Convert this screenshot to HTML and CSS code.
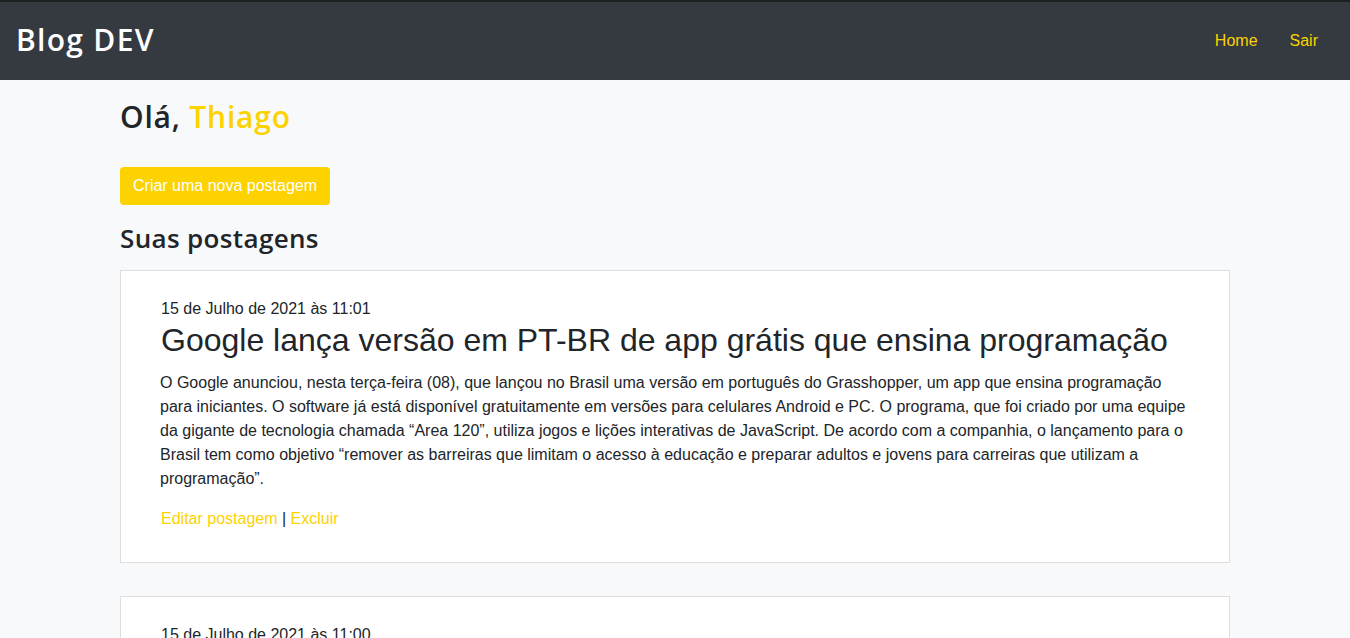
FILE: index.html
```html
<!DOCTYPE html>
<html lang="pt-BR">
<head>
<meta charset="utf-8">
<title>Blog DEV</title>
<link rel="stylesheet" href="styles.css">
</head>
<body>
<header class="navbar">
  <a class="brand" href="#">Blog DEV</a>
  <nav class="nav">
    <a class="nav-link" href="#">Home</a>
    <a class="nav-link" href="#">Sair</a>
  </nav>
</header>
<main class="container">
  <h2 class="greeting">Olá, <span class="accent">Thiago</span></h2>
  <a class="btn" href="#">Criar uma nova postagem</a>
  <h3 class="section-title">Suas postagens</h3>
  <article class="card">
    <div class="date">15 de Julho de 2021 às 11:01</div>
    <h1 class="post-title">Google lança versão em PT-BR de app grátis que ensina programação</h1>
    <p class="post-body">O Google anunciou, nesta terça-feira (08), que lançou no Brasil uma versão em português do Grasshopper, um app que ensina programação para iniciantes. O software já está disponível gratuitamente em versões para celulares Android e PC. O programa, que foi criado por uma equipe da gigante de tecnologia chamada “Area 120”, utiliza jogos e lições interativas de JavaScript. De acordo com a companhia, o lançamento para o Brasil tem como objetivo “remover as barreiras que limitam o acesso à educação e preparar adultos e jovens para carreiras que utilizam a programação”.</p>
    <div class="actions"><a href="#">Editar postagem</a> | <a href="#">Excluir</a></div>
  </article>
  <article class="card">
    <div class="date">15 de Julho de 2021 às 11:00</div>
    <h1 class="post-title">Nova postagem</h1>
    <p class="post-body">Conteúdo da postagem.</p>
    <div class="actions"><a href="#">Editar postagem</a> | <a href="#">Excluir</a></div>
  </article>
</main>
</body>
</html>
```

FILE: styles.css
```css
* { box-sizing: border-box; }
html, body { margin: 0; padding: 0; }
body {
  background: #f8f9fa;
  font-family: "Liberation Sans", Arial, sans-serif;
  font-size: 16px;
  line-height: 24px;
  color: #212529;
}
a { text-decoration: none; }
.navbar {
  height: 80px;
  background: #343a40;
  border-top: 2px solid #1e1f21;
  display: flex;
  align-items: center;
  justify-content: space-between;
  padding: 0 16px;
}
.brand {
  font-family: "Open Sans", "Noto Sans", sans-serif;
  font-weight: 600;
  font-size: 30px;
  color: #fff;
  letter-spacing: 1.3px;
  padding-bottom: 2px;
}
.nav { display: flex; }
.nav-link {
  color: #fcd200;
  padding: 0 16px;
  font-size: 16px;
}
.container {
  width: 1110px;
  margin: 0 auto;
  padding-top: 18px;
}
.greeting {
  font-family: "Open Sans", "Noto Sans", sans-serif;
  font-weight: 600;
  font-size: 30px;
  line-height: 38px;
  margin: 0 0 31px;
  letter-spacing: 0.8px;
}
.accent { color: #fcd200; }
.btn {
  display: inline-block;
  background: #fcd200;
  color: #fff;
  padding: 7px 13px;
  border-radius: 4px;
  font-size: 16px;
  line-height: 24px;
}
.section-title {
  font-family: "Open Sans", "Noto Sans", sans-serif;
  font-weight: 600;
  font-size: 26px;
  line-height: 34px;
  margin: 16px 0 15px;
  letter-spacing: 0.35px;
}
.card {
  background: #fff;
  border: 1px solid #dedede;
  padding: 26px 40px 31px;
  margin-bottom: 33px;
}
.date { font-size: 16px; line-height: 24px; }
.post-title {
  font-weight: 400;
  font-size: 32px;
  line-height: 38px;
  margin: 0 0 12px;
}
.post-body {
  margin: 0 0 16px -1px;
  font-size: 16px;
  line-height: 24px;
}
.actions { color: #212529; }
.actions a { color: #fcd200; }
```
